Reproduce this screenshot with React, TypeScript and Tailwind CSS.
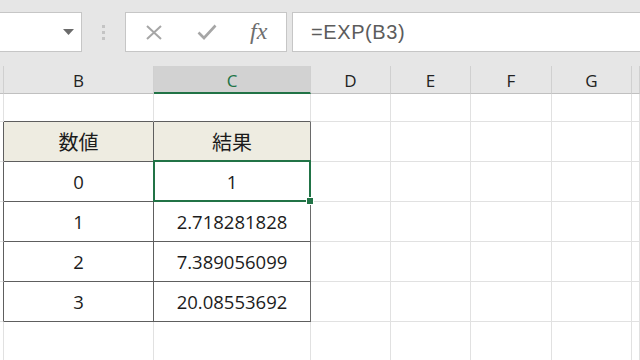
import React from "react";

const colW = [
  "w-[4px]",
  "w-[150px]",
  "w-[157px]",
  "w-[80px]",
  "w-[80px]",
  "w-[81px]",
  "w-[80px]",
  "flex-1",
];

const letters = ["", "B", "C", "D", "E", "F", "G", ""];

const numFont = { fontFamily: '"Open Sans", "Liberation Sans", sans-serif' };
const cjkFont = {
  fontFamily: '"Noto Sans CJK JP", "Noto Sans CJK SC", sans-serif',
};

type Cell = { text?: string; cls?: string; cjk?: boolean };

function BodyRow({ h, cells }: { h: string; cells: Cell[] }) {
  return (
    <div className={`flex ${h}`}>
      {colW.map((w, i) => {
        const c = cells[i] || {};
        return (
          <div
            key={i}
            className={`${w} shrink-0 flex items-center justify-center border-r border-b ${
              c.cls || "border-[#e1e1e1]"
            } text-[#1c1c1c]`}
            style={c.cjk ? cjkFont : numFont}
          >
            {c.text ? (
              <span className={c.cjk ? "text-[20px]" : "text-[18.5px]"}>{c.text}</span>
            ) : null}
          </div>
        );
      })}
    </div>
  );
}

export default function App() {
  const dark = "border-[#5e5e5e]";
  const aCell: Cell = { cls: "border-r-[#5e5e5e] border-b-[#e1e1e1]" };
  const tableRow = (b: string, c: string, cjk = false, bg = "") => [
    aCell,
    { text: b, cls: `${dark} ${bg}`, cjk },
    { text: c, cls: `border-r-[#6a6a6a] border-b-[#5e5e5e] ${bg}`, cjk },
  ];

  return (
    <div className="relative w-[640px] h-[360px] overflow-hidden bg-white">
      {/* Toolbar */}
      <div className="h-[66px] bg-[#e6e6e6] pt-[12px] flex">
        <div className="w-[82px] h-[40px] bg-white border border-l-0 border-[#c6c6c6] flex items-center justify-end pr-[7px]">
          <svg width="11" height="6" viewBox="0 0 11 6">
            <path d="M0 0 H11 L5.5 6 Z" fill="#6b6b6b" />
          </svg>
        </div>
        <div className="w-[43px] h-[40px] flex flex-col items-center justify-center gap-[3px]">
          <div className="w-[3px] h-[3px] bg-[#c4c4c4]" />
          <div className="w-[3px] h-[3px] bg-[#c4c4c4]" />
          <div className="w-[3px] h-[3px] bg-[#c4c4c4]" />
        </div>
        <div className="w-[162px] h-[40px] bg-white border border-[#c6c6c6] flex items-center pl-[19px]">
          <svg width="18" height="15" viewBox="0 0 18 15">
            <path d="M2 1 L16 14 M16 1 L2 14" stroke="#a6a6a6" strokeWidth="2" fill="none" />
          </svg>
          <svg width="20" height="16" viewBox="0 0 20 16" className="ml-[34px]">
            <path d="M1.5 8.5 L7 14 L18.5 1.5" stroke="#a6a6a6" strokeWidth="2.6" fill="none" />
          </svg>
          <span
            className="ml-[33px] italic text-[24px] leading-none text-[#6e6e6e] -mt-[2px]"
            style={{ fontFamily: '"Liberation Serif", serif' }}
          >
            fx
          </span>
        </div>
        <div className="ml-[5px] flex-1 h-[40px] bg-white border border-r-0 border-[#c6c6c6] flex items-center pl-[18px]">
          <span
            className="text-[20px] tracking-[0.6px] text-[#5c5c5c]"
            style={{ fontFamily: '"Liberation Sans", sans-serif' }}
          >
            =EXP(B3)
          </span>
        </div>
      </div>

      {/* Column headers */}
      <div className="flex h-[28px] bg-[#e6e6e6]">
        {colW.map((w, i) => (
          <div
            key={i}
            className={`${w} shrink-0 flex items-center justify-center pt-[3px] border-r border-r-[#d0d0d0] ${
              i === 2
                ? "bg-[#d2d2d2] border-b-2 border-b-[#217346] text-[#217346]"
                : "border-b border-b-[#c0c0c0] text-[#222222]"
            }`}
            style={{ fontFamily: '"Open Sans", "Liberation Sans", sans-serif' }}
          >
            <span className="text-[17px]">{letters[i]}</span>
          </div>
        ))}
      </div>

      {/* Rows */}
      <BodyRow
        h="h-[28px]"
        cells={[
          {},
          { cls: "border-r-[#e1e1e1] border-b-[#5e5e5e]" },
          { cls: "border-r-[#e1e1e1] border-b-[#5e5e5e]" },
        ]}
      />
      <BodyRow h="h-[40px]" cells={tableRow("数値", "結果", true, "bg-[#eeece1]")} />
      <BodyRow h="h-[40px]" cells={tableRow("0", "1")} />
      <BodyRow h="h-[40px]" cells={tableRow("1", "2.718281828")} />
      <BodyRow h="h-[40px]" cells={tableRow("2", "7.389056099")} />
      <BodyRow h="h-[40px]" cells={tableRow("3", "20.08553692")} />
      <BodyRow h="h-[40px]" cells={[]} />

      {/* Selection */}
      <div className="absolute left-[153px] top-[160px] w-[158px] h-[42px] border-2 border-[#217346]" />
      <div className="absolute left-[306px] top-[197px] w-[8px] h-[8px] bg-[#217346] border border-white" />
    </div>
  );
}
